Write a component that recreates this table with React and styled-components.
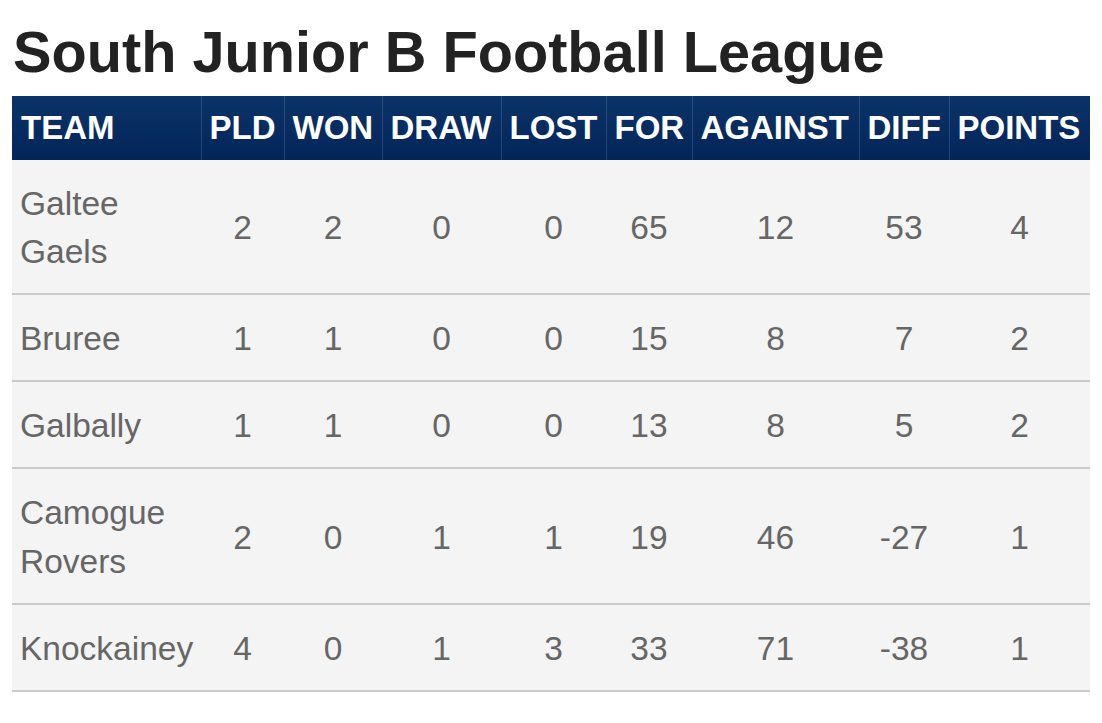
import React from 'react';
import styled, { createGlobalStyle } from 'styled-components';

const GlobalStyle = createGlobalStyle`
  body {
    margin: 0;
    background: #fff;
    font-family: "Liberation Sans", Arial, sans-serif;
  }
`

const Page = styled.div`
  padding: 16px 12px 0 12px;
`

const Title = styled.h1`
  margin: 0 0 8px 1px;
  font-size: 57.7px;
  line-height: 72px;
  font-weight: 700;
  color: #222;
`

const Table = styled.table`
  width: 1078px;
  border-collapse: collapse;
  table-layout: fixed;
`

const Head = styled.thead`
  background: linear-gradient(#0b3367, #03255a);
`

const HeadCell = styled.th`
  height: 64px;
  padding: 0 0 0 8px;
  text-align: left;
  color: #fff;
  font-size: 33px;
  font-weight: 700;
  white-space: nowrap;
  border-left: 1px solid rgba(255, 255, 255, 0.14);
  &:first-child { border-left: none; padding-left: 9px; }
`

const Row = styled.tr`
  background: #f4f4f4;
  border-bottom: 2px solid #cbcbcb;
`

const Cell = styled.td`
  padding: 20px 0 16.6px;
  font-size: 33.5px;
  line-height: 48.4px;
  color: #666;
  white-space: ${p => (p.$team ? 'normal' : 'nowrap')};
  text-align: ${p => (p.$team ? 'left' : 'center')};
  padding-left: ${p => (p.$team ? '8px' : '0')};
`

const columns = [
  ['TEAM', 189],
  ['PLD', 83],
  ['WON', 98],
  ['DRAW', 119],
  ['LOST', 105],
  ['FOR', 86],
  ['AGAINST', 167],
  ['DIFF', 90],
  ['POINTS', 141],
]

const rows = [
  ['Galtee Gaels', 2, 2, 0, 0, 65, 12, 53, 4],
  ['Bruree', 1, 1, 0, 0, 15, 8, 7, 2],
  ['Galbally', 1, 1, 0, 0, 13, 8, 5, 2],
  ['Camogue Rovers', 2, 0, 1, 1, 19, 46, -27, 1],
  ['Knockainey', 4, 0, 1, 3, 33, 71, -38, 1],
]

const App = () => {
  return (
    <Page>
      <GlobalStyle />
      <Title>South Junior B Football League</Title>
      <Table>
        <colgroup>
          {columns.map(([name, w]) => <col key={name} style={{ width: w }} />)}
        </colgroup>
        <Head>
          <tr>
            {columns.map(([name]) => <HeadCell key={name}>{name}</HeadCell>)}
          </tr>
        </Head>
        <tbody>
          {rows.map(r => (
            <Row key={r[0]}>
              {r.map((v, i) => <Cell key={i} $team={i === 0}>{v}</Cell>)}
            </Row>
          ))}
        </tbody>
      </Table>
    </Page>
  )
}

export default App;
